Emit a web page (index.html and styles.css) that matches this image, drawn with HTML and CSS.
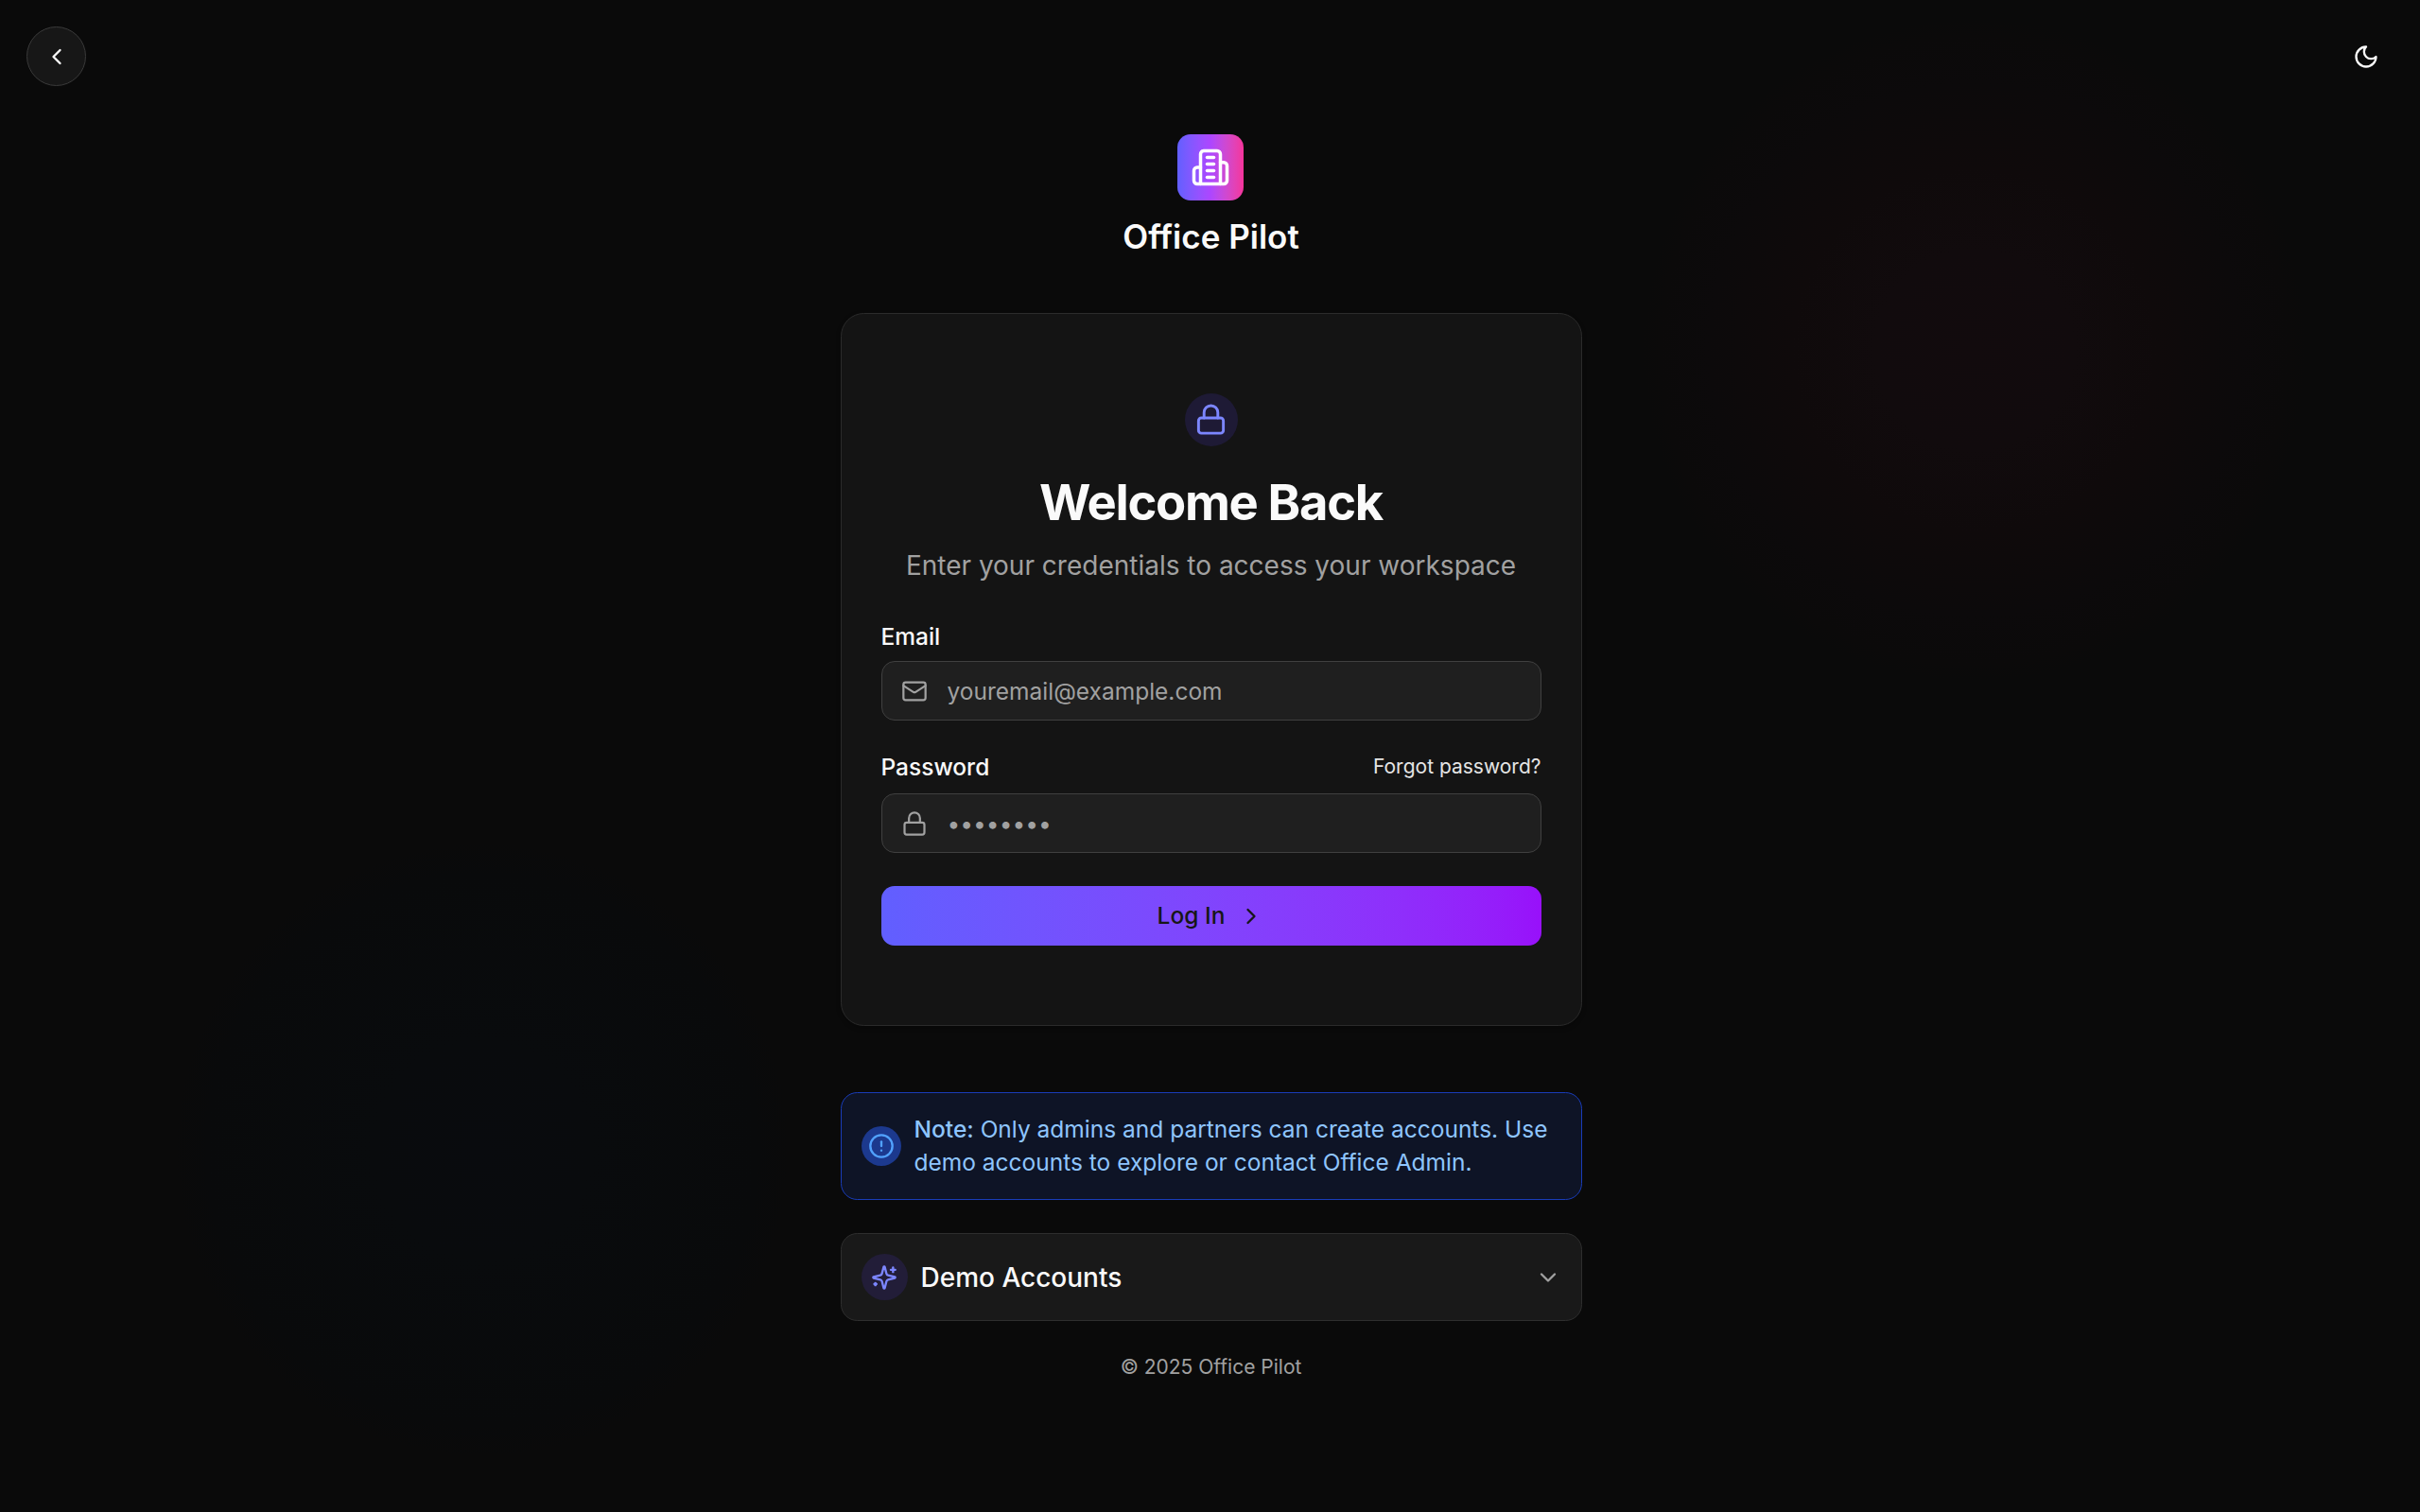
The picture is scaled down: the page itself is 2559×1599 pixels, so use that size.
FILE: index.html
```html
<!DOCTYPE html>
<html lang="en">
<head>
<meta charset="utf-8">
<title>Office Pilot – Log In</title>
<link rel="stylesheet" href="styles.css">
</head>
<body>
<div class="page">
  <div class="glow glow-rose"></div>
  <div class="glow glow-sky"></div>
  <header class="topbar">
    <button class="back" aria-label="Back"><svg class="icon" viewBox="0 0 24 24"><path d="m15 18-6-6 6-6"/></svg></button>
    <button class="theme" aria-label="Theme"><svg class="icon" viewBox="0 0 24 24"><path d="M12 3a6 6 0 0 0 9 9 9 9 0 1 1-9-9Z"/></svg></button>
  </header>
  <main class="column">
    <div class="brand">
      <div class="logo"><svg class="icon icon-logo" viewBox="0 0 24 24"><path d="M6 22V4a2 2 0 0 1 2-2h8a2 2 0 0 1 2 2v18Z"/><path d="M6 12H4a2 2 0 0 0-2 2v6a2 2 0 0 0 2 2h2"/><path d="M18 9h2a2 2 0 0 1 2 2v9a2 2 0 0 1-2 2h-2"/><path d="M10 6h4"/><path d="M10 10h4"/><path d="M10 14h4"/><path d="M10 18h4"/></svg></div>
      <div class="brand-name">Office Pilot</div>
    </div>
    <form class="card">
      <div class="lock-badge"><svg class="icon icon-lock" viewBox="0 0 24 24"><rect x="3" y="11" width="18" height="11" rx="2"/><path d="M7 11V7a5 5 0 0 1 10 0v4"/></svg></div>
      <h1 class="title">Welcome Back</h1>
      <p class="subtitle">Enter your credentials to access your workspace</p>
      <label class="label" for="email">Email</label>
      <div class="field">
        <svg class="icon" viewBox="0 0 24 24"><rect x="2" y="4" width="20" height="16" rx="2"/><path d="m22 7-8.97 5.7a1.94 1.94 0 0 1-2.06 0L2 7"/></svg>
        <input class="input" id="email" type="email" placeholder="youremail@example.com">
      </div>
      <div class="label-row">
        <label class="label" for="password">Password</label>
        <a class="forgot">Forgot password?</a>
      </div>
      <div class="field">
        <svg class="icon" viewBox="0 0 24 24"><rect x="3" y="11" width="18" height="11" rx="2"/><path d="M7 11V7a5 5 0 0 1 10 0v4"/></svg>
        <input class="input" id="password" type="password" placeholder="••••••••">
      </div>
      <button class="submit" type="button"><span>Log In</span><svg class="icon" viewBox="0 0 24 24"><path d="m9 18 6-6-6-6"/></svg></button>
    </form>
    <div class="note">
      <div class="note-badge"><svg class="icon" viewBox="0 0 24 24"><circle cx="12" cy="12" r="10"/><path d="M12 8v4"/><path d="M12 16h.01"/></svg></div>
      <p class="note-text"><span class="note-strong">Note:</span> Only admins and partners can create accounts. Use demo accounts to explore or contact Office Admin.</p>
    </div>
    <div class="demo">
      <div class="demo-badge"><svg class="icon" viewBox="0 0 24 24"><path d="M9.937 15.5A2 2 0 0 0 8.5 14.063l-6.135-1.582a.5.5 0 0 1 0-.962L8.5 9.936A2 2 0 0 0 9.937 8.5l1.582-6.135a.5.5 0 0 1 .963 0L14.063 8.5A2 2 0 0 0 15.5 9.937l6.135 1.581a.5.5 0 0 1 0 .964L15.5 14.063a2 2 0 0 0-1.437 1.437l-1.582 6.135a.5.5 0 0 1-.963 0z"/><path d="M20 3v4"/><path d="M22 5h-4"/><path d="M4 17v2"/><path d="M5 18H3"/></svg></div>
      <span class="demo-title">Demo Accounts</span>
      <svg class="icon demo-chevron" viewBox="0 0 24 24"><path d="m6 9 6 6 6-6"/></svg>
    </div>
    <footer class="footer">© 2025 Office Pilot</footer>
  </main>
</div>
</body>
</html>
```
FILE: styles.css
```css
* { box-sizing: border-box; margin: 0; }
body {
  background: #0a0a0a;
  color: #fafafa;
  font-family: Inter, "Liberation Sans", sans-serif;
  font-size: 24.5px;
  line-height: 35px;
}
button { font: inherit; color: inherit; border: 0; background: none; padding: 0; }
.page { position: relative; height: 1599px; overflow: hidden; }
.icon {
  width: 28px; height: 28px; flex: none;
  fill: none; stroke: currentColor; stroke-width: 2;
  stroke-linecap: round; stroke-linejoin: round;
}
.glow { position: absolute; border-radius: 50%; }
.glow-rose {
  left: 1738px; top: 20px; width: 700px; height: 700px;
  background: radial-gradient(closest-side, #120b0d, #110b0d 30%, #0f0a0b 55%, #0c0a0b 80%, #0b0a0a 95%, #0a0a0a);
}
.glow-sky {
  left: 186px; top: 892px; width: 648px; height: 648px;
  background: radial-gradient(closest-side, #090b0e, #090b0d 35%, #090a0b 90%, #0a0a0a);
}
.topbar {
  position: relative;
  display: flex; justify-content: space-between;
  padding: 28px 26px 0 28px; height: 142px;
}
.back, .theme {
  display: flex; align-items: center; justify-content: center;
  width: 63px; height: 63px; border-radius: 50%;
}
.back { background: #171717; border: 1px solid #3a3a3a; }
.column { position: relative; width: 784px; margin: 0 auto; left: 1px; }
.brand { display: flex; flex-direction: column; align-items: center; gap: 14px; height: 189px; }
.logo {
  display: flex; align-items: center; justify-content: center;
  width: 70px; height: 70px; margin-right: 1px; border-radius: 14px;
  background: linear-gradient(to right in oklab, #615fff, #ad46ff 50%, #f6339a);
}
.icon-logo { width: 42px; height: 42px; color: #fff; }
.brand-name { font-size: 35px; line-height: 49px; font-weight: 600; }
.card {
  display: flex; flex-direction: column;
  height: 754px; padding: 84px 42px;
  border: 1px solid #2b2b2b; border-radius: 24.5px;
  background: #141414;
  box-shadow: 0 2px 5px rgba(0, 0, 0, .3);
}
.lock-badge {
  display: flex; align-items: center; justify-content: center; align-self: center;
  width: 56px; height: 56px; padding-bottom: 1px; border-radius: 50%;
  background: #1e1a35; color: #7c86ff;
}
.icon-lock { width: 35px; height: 35px; }
.title {
  margin-top: 28px; text-align: center;
  font-size: 52.5px; line-height: 63px; font-weight: 700; letter-spacing: -0.025em;
}
.subtitle { margin-top: 14px; text-align: center; font-size: 28px; line-height: 42px; color: #a1a1a1; }
.label { font-weight: 500; line-height: 24px; }
.subtitle + .label { margin-top: 42px; }
.label + .field, .label-row + .field { margin-top: 14px; }
.field {
  display: flex; align-items: center; gap: 21px;
  height: 63px; padding: 0 20px;
  border: 1px solid #404040; border-radius: 14px;
  background: #1f1f1f; color: #a1a1a1;
}
.field .icon { stroke-width: 1.9; }
.input {
  flex: 1; min-width: 0; border: 0; padding: 2px 0 0; background: none; outline: none;
  font: inherit; color: #fafafa;
}
.input::placeholder { color: #a1a1a1; opacity: 1; }
.label-row {
  display: flex; align-items: center; justify-content: space-between;
  height: 28px; margin-top: 35px;
}
.forgot { font-size: 21px; line-height: 28px; color: #e5e5e5; }
.submit {
  display: flex; align-items: center; justify-content: center; gap: 14px;
  height: 63px; margin-top: 35px; border-radius: 14px;
  background: linear-gradient(to right in oklab, #615fff, #9810fa);
  color: #171717; font-weight: 500;
}
.note {
  display: flex; align-items: center; gap: 14px;
  height: 114px; margin-top: 70px; padding: 0 20px 0 21px;
  border: 1px solid #193cb8; border-radius: 17.5px;
  background: #0e1426; color: #8ec5ff;
}
.note-badge, .demo-badge {
  display: flex; align-items: center; justify-content: center; flex: none;
  border-radius: 50%;
}
.note-badge { width: 42px; height: 42px; background: #1c398e; color: #51a2ff; }
.note-strong { font-weight: 500; }
.demo {
  display: flex; align-items: center; gap: 14px;
  height: 93px; margin-top: 35px; padding: 0 21px;
  border: 1px solid #2e2e2e; border-radius: 17.5px;
  background: #191919;
}
.demo-badge { width: 49px; height: 49px; background: #221d38; color: #7c86ff; }
.demo-title { font-size: 28px; line-height: 42px; font-weight: 500; }
.demo-chevron { margin-left: auto; color: #a1a1a1; }
.footer { margin-top: 35px; text-align: center; font-size: 21px; line-height: 28px; color: #a1a1a1; }
```
